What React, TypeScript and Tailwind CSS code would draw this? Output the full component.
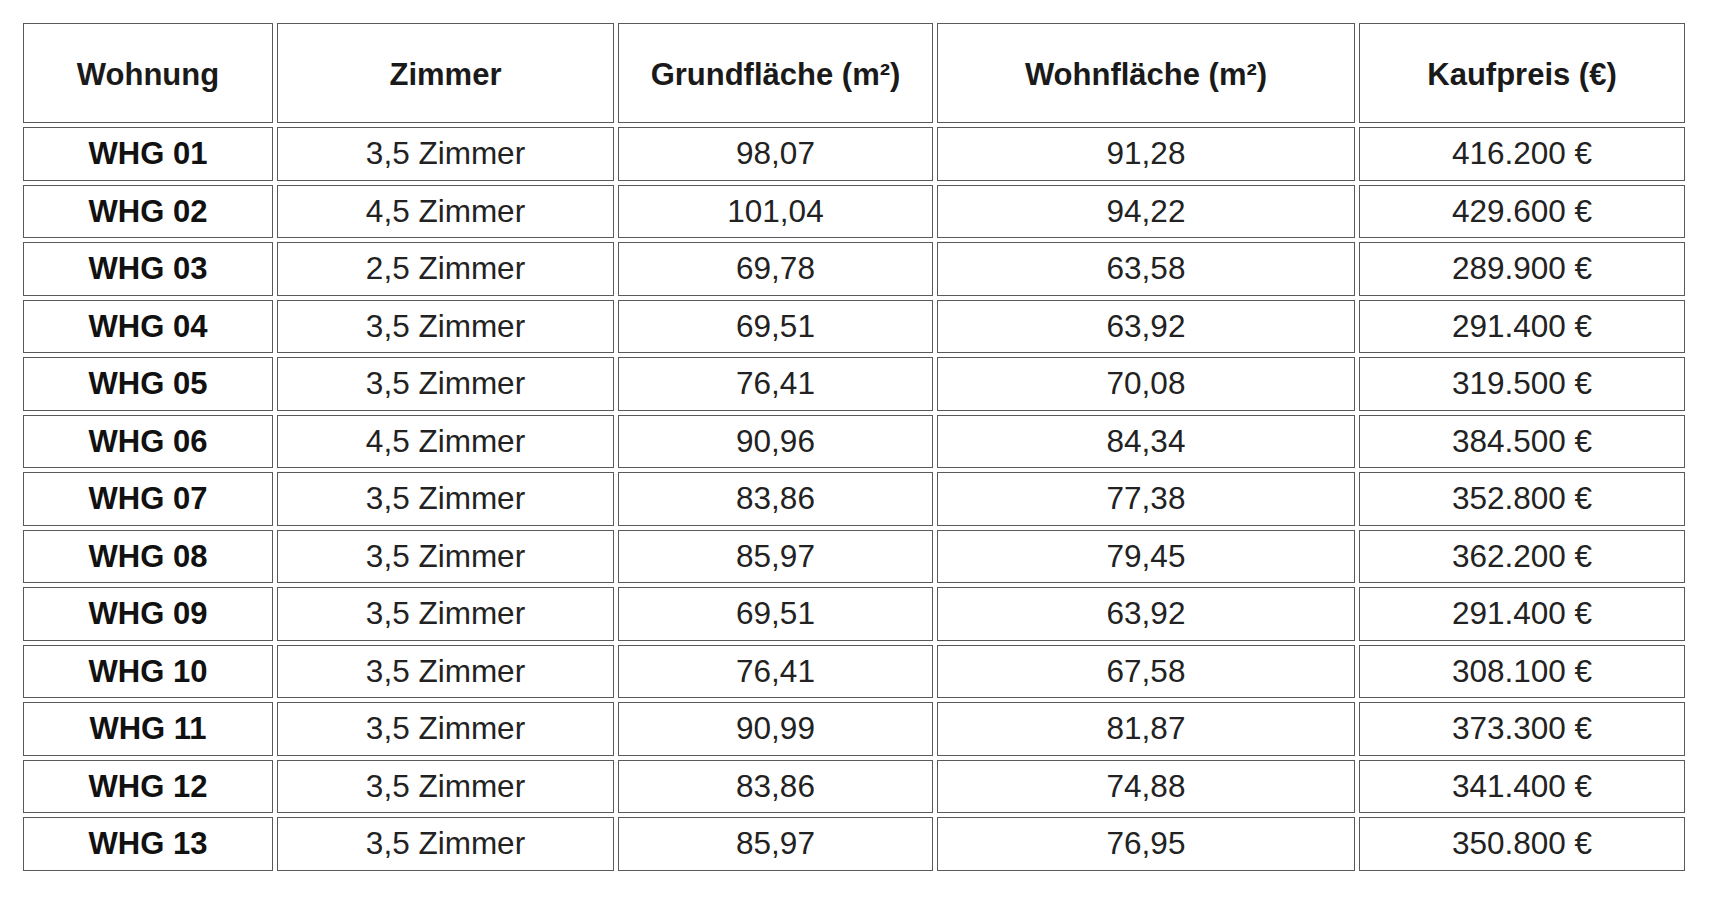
import React from "react";

const headers = ["Wohnung", "Zimmer", "Grundfläche (m²)", "Wohnfläche (m²)", "Kaufpreis (€)"];

const rows: [string, string, string, string, string][] = [
  ["WHG 01", "3,5 Zimmer", "98,07", "91,28", "416.200 €"],
  ["WHG 02", "4,5 Zimmer", "101,04", "94,22", "429.600 €"],
  ["WHG 03", "2,5 Zimmer", "69,78", "63,58", "289.900 €"],
  ["WHG 04", "3,5 Zimmer", "69,51", "63,92", "291.400 €"],
  ["WHG 05", "3,5 Zimmer", "76,41", "70,08", "319.500 €"],
  ["WHG 06", "4,5 Zimmer", "90,96", "84,34", "384.500 €"],
  ["WHG 07", "3,5 Zimmer", "83,86", "77,38", "352.800 €"],
  ["WHG 08", "3,5 Zimmer", "85,97", "79,45", "362.200 €"],
  ["WHG 09", "3,5 Zimmer", "69,51", "63,92", "291.400 €"],
  ["WHG 10", "3,5 Zimmer", "76,41", "67,58", "308.100 €"],
  ["WHG 11", "3,5 Zimmer", "90,99", "81,87", "373.300 €"],
  ["WHG 12", "3,5 Zimmer", "83,86", "74,88", "341.400 €"],
  ["WHG 13", "3,5 Zimmer", "85,97", "76,95", "350.800 €"],
];

export default function App() {
  return (
    <div
      className="w-[1714px] h-[900px] bg-white pt-[23px] pl-[23px] text-[#1a1a1a]"
      style={{ fontFamily: '"Liberation Sans", Arial, sans-serif' }}
    >
      <div className="grid grid-cols-[250px_337px_315px_418px_326px] grid-rows-[100px_repeat(13,53.5px)] gap-[4px]">
        {headers.map((h) => (
          <div
            key={h}
            className="border-[1.5px] border-[#5a5a5a] flex items-center justify-center font-bold text-[31px] leading-none pt-[2px]"
          >
            {h}
          </div>
        ))}
        {rows.map((r) =>
          r.map((c, i) => (
            <div
              key={r[0] + i}
              className={
                "border-[1.5px] border-[#5a5a5a] flex items-center justify-center leading-none " +
                (i === 0 ? "font-bold text-[31px] text-[#111]" : "text-[31.5px] text-[#222]")
              }
            >
              {c}
            </div>
          ))
        )}
      </div>
    </div>
  );
}
